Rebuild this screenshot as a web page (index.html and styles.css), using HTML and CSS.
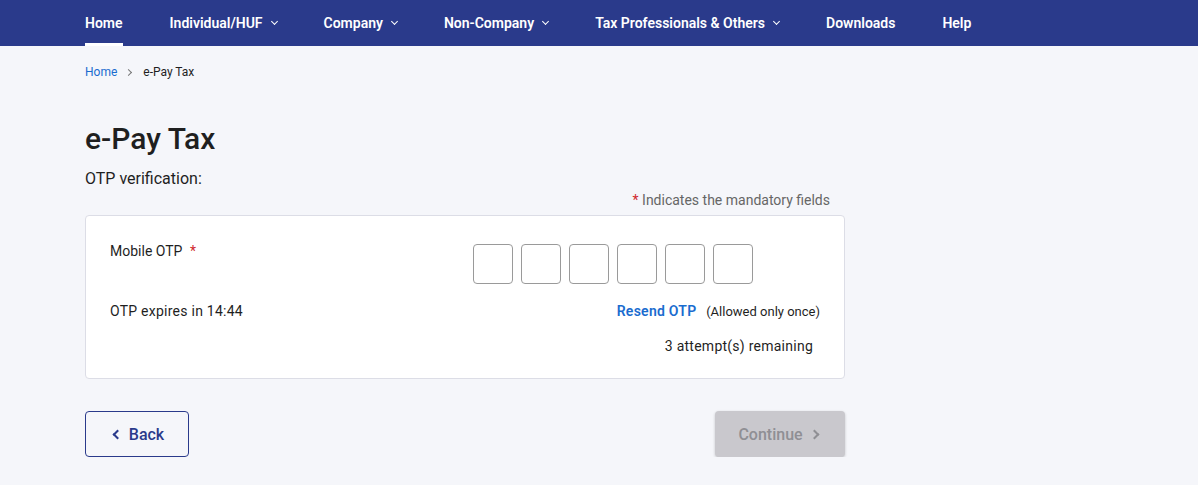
FILE: index.html
```html
<!DOCTYPE html>
<html lang="en">
<head>
  <meta charset="UTF-8" />
  <meta name="viewport" content="width=device-width, initial-scale=1.0"/>
  <title>e-Pay Tax</title>
  <link rel="stylesheet" href="styles.css">
</head>
<body>
  <nav class="topnav">
    <a href="#" class="nav-item active">Home</a>
    <a href="#" class="nav-item">Individual/HUF <span class="caret"></span></a>
    <a href="#" class="nav-item">Company <span class="caret"></span></a>
    <a href="#" class="nav-item">Non-Company <span class="caret"></span></a>
    <a href="#" class="nav-item">Tax Professionals &amp; Others <span class="caret"></span></a>
    <a href="#" class="nav-item">Downloads</a>
    <a href="#" class="nav-item">Help</a>
  </nav>

  <main class="page">
    <div class="breadcrumb">
      <a href="#">Home</a>
      <span class="crumb-sep"></span>
      <span>e-Pay Tax</span>
    </div>

    <h1>e-Pay Tax</h1>
    <p class="subtitle">OTP verification:</p>
    <p class="mandatory"><span class="req">*</span> Indicates the mandatory fields</p>

    <div class="card">
      <div class="otp-row">
        <label>Mobile OTP <span class="req">*</span></label>
        <div class="otp-boxes">
          <input type="text" maxlength="1" />
          <input type="text" maxlength="1" />
          <input type="text" maxlength="1" />
          <input type="text" maxlength="1" />
          <input type="text" maxlength="1" />
          <input type="text" maxlength="1" />
        </div>
      </div>
      <div class="info-row">
        <span>OTP expires in <span id="timer">14:44</span></span>
        <span class="resend"><a href="#">Resend OTP</a> <small>(Allowed only once)</small></span>
      </div>
      <div class="attempts">3 attempt(s) remaining</div>
    </div>

    <div class="actions">
      <button class="btn-back"><span class="chev-left"></span> Back</button>
      <button class="btn-continue" disabled>Continue <span class="chev-right"></span></button>
    </div>
  </main>
</body>
</html>
```

FILE: styles.css
```css
* {
  box-sizing: border-box;
}

body {
  margin: 0;
  font-family: Roboto, 'Liberation Sans', sans-serif;
  background: #f5f6fa;
  color: #1f1f1f;
}

.topnav {
  height: 46px;
  background: #2a3a8b;
  display: flex;
  align-items: stretch;
  padding-left: 85px;
  gap: 47px;
}

.nav-item {
  display: flex;
  align-items: center;
  color: #fff;
  text-decoration: none;
  font-size: 14px;
  font-weight: 600;
  border-bottom: 3px solid transparent;
  padding-top: 2px;
}

.nav-item.active {
  border-bottom-color: #fff;
}

.caret {
  width: 5px;
  height: 5px;
  border-right: 1.5px solid #fff;
  border-bottom: 1.5px solid #fff;
  transform: rotate(45deg);
  margin: 0 0 3px 9px;
}

.page {
  width: 760px;
  margin-left: 85px;
}

.breadcrumb {
  display: flex;
  align-items: center;
  font-size: 12px;
  margin-top: 19px;
  height: 14px;
}

.breadcrumb a {
  color: #1a6ccf;
  text-decoration: none;
}

.crumb-sep {
  width: 5px;
  height: 5px;
  border-right: 1.2px solid #777;
  border-top: 1.2px solid #777;
  transform: rotate(45deg);
  margin: 0 12px 0 9px;
}

h1 {
  font-size: 30px;
  font-weight: 500;
  margin: 42px 0 0;
  line-height: 36px;
}

.subtitle {
  font-size: 16px;
  margin: 12px 0 0;
  line-height: 20px;
}

.mandatory {
  text-align: right;
  font-size: 14px;
  color: #666;
  margin: 2px 15px 0 0;
  line-height: 18px;
}

.req {
  color: #d0282d;
}

.card {
  margin-top: 6px;
  background: #fff;
  border: 1px solid #dcdde6;
  border-radius: 4px;
  padding: 28px 24px 24px;
}

.otp-row {
  display: flex;
  font-size: 14px;
}

.otp-row label {
  width: 363px;
  line-height: 14px;
}

.otp-row label .req {
  margin-left: 4px;
}

.otp-boxes {
  display: flex;
  gap: 8px;
}

.otp-boxes input {
  width: 40px;
  height: 40px;
  border: 1px solid #9a9a9a;
  border-radius: 4px;
  font-size: 16px;
  text-align: center;
}

.info-row {
  display: flex;
  justify-content: space-between;
  align-items: baseline;
  font-size: 14px;
  letter-spacing: 0.25px;
  margin-top: 19px;
}

.resend a {
  color: #1a6ccf;
  font-weight: 600;
  text-decoration: none;
  margin-right: 6px;
}

.resend small {
  font-size: 13px;
  letter-spacing: 0;
}

.attempts {
  text-align: right;
  font-size: 14px;
  letter-spacing: 0.25px;
  margin-top: 19px;
  padding-right: 7px;
}

.actions {
  display: flex;
  justify-content: space-between;
  margin-top: 32px;
}

.actions button {
  height: 46px;
  border-radius: 4px;
  font-family: inherit;
  font-size: 16px;
  font-weight: 500;
  display: flex;
  align-items: center;
  justify-content: center;
  gap: 8px;
}

.btn-back {
  width: 104px;
  background: transparent;
  border: 1px solid #2a3a8b;
  color: #2a3a8b;
  cursor: pointer;
}

.btn-continue {
  width: 130px;
  background: #c9c8cd;
  border: none;
  color: #8f8f94;
  box-shadow: 0 1px 3px rgba(0, 0, 0, 0.2);
}

.chev-left,
.chev-right {
  width: 7px;
  height: 7px;
  border-left: 2px solid currentColor;
  border-bottom: 2px solid currentColor;
}

.chev-left {
  transform: rotate(45deg);
  margin-left: 4px;
}

.chev-right {
  transform: rotate(-135deg);
  margin-right: 4px;
}
```
